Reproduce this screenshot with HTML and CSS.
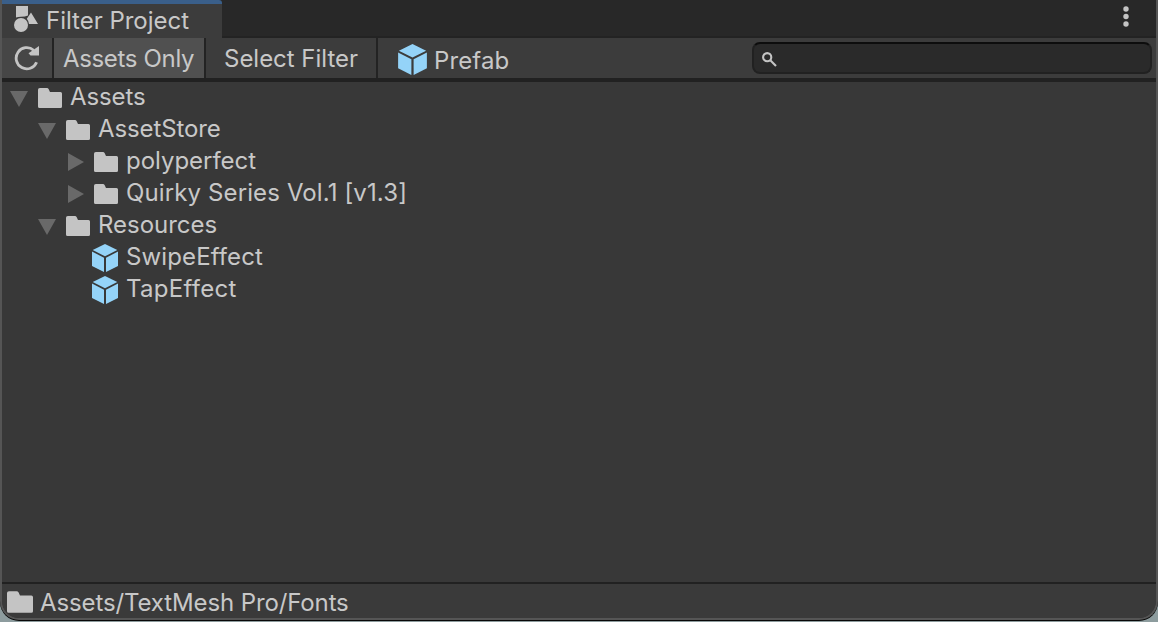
FILE: index.html
```html
<!DOCTYPE html>
<html lang="en">
<head>
<meta charset="utf-8">
<title>Filter Project</title>
<link rel="stylesheet" href="styles.css">
</head>
<body>
<svg class="defs" width="0" height="0">
  <symbol id="folder" viewBox="0 0 24 20"><path d="M0 1.8Q0 0 1.8 0H9Q10 0 10.6 1L12 4H22.5Q24 4 24 5.5V18.5Q24 20 22.5 20H1.5Q0 20 0 18.5Z"/></symbol>
  <symbol id="cube" viewBox="0 0 26 28"><path d="M13 0L25.3 6L13 12.3L.7 6Z"/><path d="M0 7.6L12 13.7V28L0 22Z"/><path d="M26 7.6L14 13.7V28L26 22Z"/></symbol>
  <symbol id="down" viewBox="0 0 18 16"><path d="M0 0H18L9 16Z"/></symbol>
  <symbol id="right" viewBox="0 0 16 18"><path d="M0 0L16 9L0 18Z"/></symbol>
</svg>
<div class="window">
  <header class="tabs">
    <div class="tab">
      <svg class="tab-icon" width="24" height="26" viewBox="0 0 24 26"><path d="M2 0H14V9.5Q11 10.7 7 10.7Q4 10.7 2 11.5Z"/><circle cx="7" cy="19" r="7"/><path d="M17 6.5L24 18H15Q14.5 14.5 12.8 12.7Z"/></svg>
      <span class="label tab-label">Filter Project</span>
    </div>
    <svg class="more" width="6" height="21" viewBox="0 0 6 21"><circle cx="3" cy="3" r="2.7"/><circle cx="3" cy="10.5" r="2.7"/><circle cx="3" cy="18" r="2.7"/></svg>
  </header>
  <div class="toolbar">
    <div class="tool refresh"><svg width="26" height="26" viewBox="0 0 26 26"><path class="arc" d="M22.6 17.2A10.6 10.6 0 1 1 19.7 5.2"/><path d="M25 1V10.5H16.5L14.5 8.2Z"/></svg></div>
    <div class="tool assets-only"><span class="label tight">Assets Only</span></div>
    <div class="tool select-filter"><span class="label">Select Filter</span></div>
    <div class="prefab"><svg class="cube" width="29" height="31"><use href="#cube"/></svg><span class="label wide">Prefab</span></div>
    <div class="search"><svg width="15" height="15" viewBox="0 0 15 15"><circle cx="5.2" cy="5.2" r="4.1"/><path d="M8.3 8.3L14 14"/></svg></div>
  </div>
  <main class="tree">
    <div class="row d0"><svg class="arrow" width="18" height="16"><use href="#down"/></svg><svg class="folder" width="24" height="20"><use href="#folder"/></svg><span class="label snug">Assets</span></div>
    <div class="row d1"><svg class="arrow" width="18" height="16"><use href="#down"/></svg><svg class="folder" width="24" height="20"><use href="#folder"/></svg><span class="label snug">AssetStore</span></div>
    <div class="row d2"><svg class="arrow" width="16" height="18"><use href="#right"/></svg><svg class="folder" width="24" height="20"><use href="#folder"/></svg><span class="label">polyperfect</span></div>
    <div class="row d2"><svg class="arrow" width="16" height="18"><use href="#right"/></svg><svg class="folder" width="24" height="20"><use href="#folder"/></svg><span class="label wide">Quirky Series Vol.1 [v1.3]</span></div>
    <div class="row d1"><svg class="arrow" width="18" height="16"><use href="#down"/></svg><svg class="folder" width="24" height="20"><use href="#folder"/></svg><span class="label">Resources</span></div>
    <div class="row item"><svg class="cube" width="26" height="28"><use href="#cube"/></svg><span class="label wide">SwipeEffect</span></div>
    <div class="row item"><svg class="cube" width="26" height="28"><use href="#cube"/></svg><span class="label wider">TapEffect</span></div>
  </main>
  <footer class="path"><svg class="folder" width="26" height="22"><use href="#folder"/></svg><span class="label snug">Assets/TextMesh Pro/Fonts</span></footer>
</div>
</body>
</html>
```
FILE: styles.css
```css
* { box-sizing: border-box; }
body {
  margin: 0;
  height: 622px;
  overflow: hidden;
  background: #8d9c9e;
  color: #c8c8c8;
  font: 390 24px/32px Inter, "Liberation Sans", sans-serif;
}
svg { display: block; flex: none; fill: #c4c4c4; }
.defs { position: absolute; }
.label { white-space: nowrap; letter-spacing: -.02px; font-variant-ligatures: none; }
.label.tight { letter-spacing: -.34px; }
.label.snug { letter-spacing: -.12px; }
.label.wide { letter-spacing: .12px; }
.label.wider { letter-spacing: .3px; }
.window {
  display: flex;
  flex-direction: column;
  height: 620px;
  border: 2px solid #555;
  border-top: 0;
  border-radius: 0 0 19px 19px;
  background: #383838;
  box-shadow: 0 1px 0 0 #080808;
  overflow: hidden;
}
.tabs {
  display: flex;
  flex: none;
  justify-content: space-between;
  height: 38px;
  background: #282828;
  box-shadow: inset 0 -2px #232323;
}
.tab {
  display: flex;
  width: 220px;
  padding-left: 12px;
  border-top: 4px solid #3a5f8a;
  border-radius: 0 3px 0 0;
  background: #3c3c3c;
}
.tab-icon { margin: 2px 8px 0 0; }
.tab-label { margin-top: 1px; }
.more { margin: 6px 27px 0 0; }
.toolbar {
  display: flex;
  flex: none;
  height: 44px;
  border-bottom: 4px solid #212121;
  background: #3c3c3c;
}
.tool { flex: none; border-right: 2px solid #232323; padding-top: 5px; }
.refresh { width: 52px; padding: 7px 0 0 12px; background: #464646; }
.arc { fill: none; stroke: #c4c4c4; stroke-width: 2.8; }
.assets-only { width: 152px; padding-left: 9px; background: #505050; }
.select-filter { width: 172px; padding-left: 18px; }
.prefab { display: flex; gap: 7px; padding: 6px 0 0 20px; }
.prefab .label { margin-top: 1px; }
.cube { fill: #94d3f8; }
.search {
  width: 400px;
  height: 32px;
  margin: 4px 4px 0 auto;
  padding: 8px 0 0 8px;
  border: 2px solid #212121;
  border-top-color: #0d0d0d;
  border-radius: 8px;
  background: #2a2a2a;
}
.search svg { fill: none; stroke: #c4c4c4; stroke-width: 2.1; }
.tree { flex: 1; margin-top: -1px; }
.row { display: flex; height: 32px; }
.row .arrow { margin: 10px 10px 0 0; fill: #696969; }
.d2 .arrow { margin-top: 8px; }
.row .folder { margin: 7px 8px 0 0; }
.d0 { padding-left: 8px; }
.d1 { padding-left: 36px; }
.d2 { padding-left: 66px; }
.item { padding-left: 90px; }
.item .cube { margin: 3px 8px 0 0; }
.path {
  display: flex;
  flex: none;
  height: 36px;
  padding-left: 5px;
  border-top: 2px solid #212121;
  background: #3a3a3a;
}
.path .folder { margin: 7px 7px 0 0; }
.path .label { margin-top: 3px; }
```
